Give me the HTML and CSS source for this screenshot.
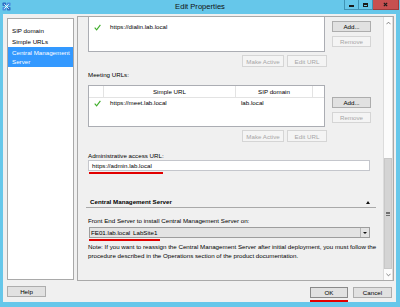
FILE: index.html
```html
<!DOCTYPE html>
<html lang="en">

<head>
    <meta charset="UTF-8">
    <title>Edit Properties</title>
    <link rel="stylesheet" href="styles.css">
</head>

<body>
    <div class="window">
        <div class="titlebar">
            <svg class="app-icon" viewBox="0 0 10 10">
                <rect x="0.5" y="0.5" width="4" height="4" rx="0.8" fill="#2f6fc4" />
                <rect x="5.5" y="0.5" width="4" height="4" rx="0.8" fill="#4a8fe0" />
                <rect x="0.5" y="5.5" width="4" height="4" rx="0.8" fill="#4a8fe0" />
                <rect x="5.5" y="5.5" width="4" height="4" rx="0.8" fill="#2f6fc4" />
                <path d="M2.5 2.5 L7.5 7.5 M7.5 2.5 L2.5 7.5" stroke="#ffffff" stroke-width="1" />
            </svg>
            <div class="title">Edit Properties</div>
            <div class="controls">
                <div class="ctl ctl-min"><span class="min-bar"></span></div>
                <div class="ctl ctl-max"><span class="max-box"></span></div>
                <div class="ctl ctl-close">
                    <svg viewBox="0 0 6 6" class="close-x">
                        <path d="M1 1 L5 5 M5 1 L1 5" stroke="#1a1a1a" stroke-width="1.4" />
                    </svg>
                </div>
            </div>
        </div>

        <div class="client">
            <div class="main-row">
                <ul class="nav">
                    <li>SIP domain</li>
                    <li>Simple URLs</li>
                    <li class="selected">Central Management Server</li>
                </ul>

                <div class="panel">
                    <div class="scroll-area">
                        <div class="inner">
                            <!-- Phone access URLs, header scrolled out of view -->
                            <div class="url-row">
                                <div class="listbox listbox-scrolled">
                                    <div class="list-row">
                                        <span class="check-cell">
                                            <svg class="check" viewBox="0 0 8 8">
                                                <path d="M0.8 4.2 L3 6.6 L7.3 1" fill="none" stroke="#3fae2a" stroke-width="1.3" />
                                            </svg>
                                        </span>
                                        <span class="url-cell">https://dialin.lab.local</span>
                                        <span class="dom-cell"></span>
                                        <span></span>
                                    </div>
                                </div>
                                <div class="side-btns">
                                    <button class="btn btn-side">Add...</button>
                                    <button class="btn btn-side" disabled>Remove</button>
                                </div>
                            </div>
                            <div class="actions">
                                <button class="btn btn-make" disabled>Make Active</button>
                                <button class="btn btn-edit" disabled>Edit URL</button>
                            </div>

                            <div class="label">Meeting URLs:</div>
                            <div class="url-row meeting">
                                <div class="listbox">
                                    <div class="list-head">
                                        <span></span>
                                        <span>Simple URL</span>
                                        <span>SIP domain</span>
                                        <span></span>
                                    </div>
                                    <div class="list-row">
                                        <span class="check-cell">
                                            <svg class="check" viewBox="0 0 8 8">
                                                <path d="M0.8 4.2 L3 6.6 L7.3 1" fill="none" stroke="#3fae2a" stroke-width="1.3" />
                                            </svg>
                                        </span>
                                        <span class="url-cell">https://meet.lab.local</span>
                                        <span class="dom-cell">lab.local</span>
                                        <span></span>
                                    </div>
                                </div>
                                <div class="side-btns">
                                    <button class="btn btn-side">Add...</button>
                                    <button class="btn btn-side" disabled>Remove</button>
                                </div>
                            </div>
                            <div class="actions">
                                <button class="btn btn-make" disabled>Make Active</button>
                                <button class="btn btn-edit" disabled>Edit URL</button>
                            </div>

                            <div class="label label-admin">Administrative access URL:</div>
                            <div class="textbox">https://admin.lab.local</div>
                            <div class="mark mark-admin"></div>

                            <div class="section-head">
                                <span>Central Management Server</span>
                                <span class="collapse"></span>
                            </div>

                            <div class="label label-fe">Front End Server to install Central Management Server on:</div>
                            <div class="combo">
                                <span class="combo-fqdn">FE01.lab.local</span>
                                <span class="combo-site">LabSite1</span>
                                <span class="combo-arrow"></span>
                            </div>
                            <div class="mark mark-combo"></div>

                            <p class="note">Note: If you want to reassign the Central Management Server after initial deployment, you must follow the procedure described in the Operations section of the product documentation.</p>
                        </div>
                    </div>

                    <div class="scrollbar">
                        <div class="sb-btn">
                            <svg viewBox="0 0 6 4" class="chev"><path d="M0.5 3.5 L3 1 L5.5 3.5" fill="none" stroke="#606060" stroke-width="0.9" /></svg>
                        </div>
                        <div class="sb-track">
                            <div class="sb-thumb">
                                <span class="grip"></span>
                            </div>
                        </div>
                        <div class="sb-btn">
                            <svg viewBox="0 0 6 4" class="chev"><path d="M0.5 0.5 L3 3 L5.5 0.5" fill="none" stroke="#606060" stroke-width="0.9" /></svg>
                        </div>
                    </div>
                </div>
            </div>

            <div class="footer">
                <button class="btn btn-foot">Help</button>
                <div class="ok-wrap">
                    <button class="btn btn-foot btn-default">OK</button>
                    <div class="mark mark-ok"></div>
                </div>
                <button class="btn btn-foot btn-cancel">Cancel</button>
            </div>
        </div>
    </div>
</body>

</html>
```

FILE: styles.css
```css
* {
    box-sizing: border-box;
}

body {
    margin: 0;
    font-family: "Liberation Sans", Arial, sans-serif;
    font-size: 6.2px;
    color: #000;
    background: #66c7ea;
}

.window {
    width: 400px;
    height: 307px;
    background: #66c7ea;
    display: flex;
    flex-direction: column;
}

/* Title bar */
.titlebar {
    height: 14px;
    display: grid;
    grid-template-columns: 1fr auto 1fr;
    align-items: start;
}

.app-icon {
    width: 9px;
    height: 9px;
    margin: 2px 0 0 2px;
}

.title {
    font-size: 7.6px;
    line-height: 14px;
    color: #111;
}

.controls {
    justify-self: end;
    display: flex;
    margin-right: 1px;
}

.ctl {
    height: 10px;
    display: flex;
    align-items: center;
    justify-content: center;
    border: 1px solid #3f93b5;
    border-top: none;
}

.ctl-min {
    width: 15px;
}

.ctl-max {
    width: 14px;
    border-left: none;
}

.ctl-close {
    width: 26px;
    background: #c75050;
    border-color: #9c3b3b;
    border-left: none;
}

.min-bar {
    width: 5px;
    height: 2px;
    margin-top: 3px;
    background: #1a1a1a;
}

.max-box {
    width: 5px;
    height: 4px;
    border: 1px solid #1a1a1a;
    border-top-width: 2px;
}

.close-x {
    width: 5px;
    height: 5px;
}

/* Client area */
.client {
    flex: 1;
    margin: 0 4px 5px 3px;
    background: #f0f0f0;
    padding: 2px 2px 0 4px;
    display: flex;
    flex-direction: column;
}

.main-row {
    display: flex;
    gap: 3px;
    align-items: flex-start;
}

.nav {
    margin: 2px 0 0;
    padding: 6px 0 0;
    list-style: none;
    width: 67px;
    height: 262px;
    background: #fff;
    border: 1px solid #a9a9a9;
}

.nav li {
    padding: 0 0 0 4px;
    line-height: 11px;
}

.nav li.selected {
    padding: 1px 0 1px 4px;
    line-height: 9px;
    background: #3399ff;
    color: #fff;
}

.panel {
    width: 317px;
    height: 265px;
    border: 1px solid #a9a9a9;
    display: flex;
}

.scroll-area {
    flex: 1;
    overflow: hidden;
    padding-left: 10px;
}

.inner {
    margin-top: -8px;
}

/* URL lists */
.url-row {
    display: flex;
    gap: 7px;
    align-items: flex-start;
}

.listbox {
    width: 237px;
    height: 42px;
    background: #fff;
    border: 1px solid #abadb3;
}

.listbox-scrolled {
    height: 43px;
    padding-top: 12px;
}

.list-head,
.list-row {
    display: grid;
    grid-template-columns: 15px 132px 77px 1fr;
}

.list-head {
    height: 12px;
    line-height: 11px;
    text-align: center;
    border-bottom: 1px solid #e3e3e3;
}

.list-head span {
    border-right: 1px solid #e3e3e3;
}

.list-head span:last-child {
    border-right: none;
}

.list-row {
    height: 10px;
    line-height: 10px;
}

.check-cell {
    display: flex;
    align-items: center;
    justify-content: center;
    padding-left: 2px;
}

.check {
    width: 7px;
    height: 7px;
}

.url-cell {
    padding-left: 6px;
}

.dom-cell {
    padding-left: 5px;
}

.side-btns {
    display: flex;
    flex-direction: column;
    gap: 4px;
    padding-top: 12px;
}

.btn {
    font: inherit;
    color: #000;
    padding: 0;
    height: 11px;
    line-height: 9px;
    border: 1px solid #adadad;
    background: #e1e1e1;
}

.btn:disabled {
    color: #a6a6a6;
    border-color: #d5d5d5;
    background: #f4f4f4;
}

.btn-side {
    width: 39px;
}

.actions {
    width: 239px;
    margin-top: 3px;
    display: flex;
    justify-content: flex-end;
    gap: 3px;
}

.actions .btn {
    height: 12px;
}

.btn-make {
    width: 42px;
}

.btn-edit {
    width: 40px;
}

.label {
    margin-top: 3px;
    line-height: 9px;
    margin-bottom: 6px;
}

.label-admin {
    margin-top: 9px;
    margin-bottom: 0;
}

.textbox {
    width: 282px;
    height: 11px;
    line-height: 9px;
    padding-left: 3px;
    background: #fff;
    border: 1px solid #c4c6cc;
}

.mark {
    height: 2px;
    background: #e20000;
}

.mark-admin {
    width: 74px;
    margin: 1px 0 0 1px;
}

/* Collapsible section */
.section-head {
    margin: 23px 0 0 -2px;
    width: 290px;
    height: 11px;
    line-height: 10px;
    padding: 0 6px 0 4px;
    display: flex;
    justify-content: space-between;
    align-items: center;
    font-weight: bold;
    border-bottom: 1px solid #a9a9a9;
}

.collapse {
    width: 0;
    height: 0;
    border-left: 2.5px solid transparent;
    border-right: 2.5px solid transparent;
    border-bottom: 3px solid #111;
}

.label-fe {
    margin-top: 8px;
    margin-bottom: 2px;
}

.combo {
    width: 281px;
    height: 11px;
    margin-left: 1px;
    display: flex;
    align-items: stretch;
    line-height: 9px;
    background: #e3e3e3;
    border: 1px solid #9d9d9d;
}

.combo-fqdn {
    width: 43px;
    padding-left: 1px;
}

.combo-site {
    flex: 1;
}

.combo-arrow {
    width: 9px;
    border-left: 1px solid #b5b5b5;
    display: flex;
    align-items: center;
    justify-content: center;
}

.combo-arrow::after {
    content: "";
    border-left: 2px solid transparent;
    border-right: 2px solid transparent;
    border-top: 2.5px solid #111;
}

.mark-combo {
    width: 71px;
    margin: 1px 0 0 1px;
}

.note {
    margin: 1px 0 0;
    width: 290px;
    line-height: 9px;
}

/* Scrollbar */
.scrollbar {
    width: 10px;
    display: flex;
    flex-direction: column;
    background: #fcfcfc;
    border-left: 1px solid #dcdcdc;
    border-right: 1px solid #dcdcdc;
}

.sb-btn {
    height: 11px;
    display: flex;
    align-items: center;
    justify-content: center;
}

.chev {
    width: 5px;
    height: 4px;
}

.sb-track {
    flex: 1;
    padding-top: 130px;
}

.sb-thumb {
    height: 111px;
    background: #d4d4d4;
    border: 1px solid #c8c8c8;
    display: flex;
    align-items: center;
    justify-content: center;
}

.grip {
    width: 4px;
    height: 4px;
    border-top: 1px solid #707070;
    border-bottom: 1px solid #707070;
    background: linear-gradient(#707070, #707070) center / 4px 1px no-repeat;
}

/* Footer buttons */
.footer {
    display: flex;
    align-items: flex-start;
    padding: 5px 2px 0 0;
}

.btn-foot {
    width: 39px;
}

.ok-wrap {
    margin: 1px 0 0 auto;
    display: flex;
    flex-direction: column;
}

.btn-default {
    width: 38px;
    border-color: #8a8a8a;
}

.mark-ok {
    width: 38px;
    margin-top: 2px;
}

.btn-cancel {
    margin: 1px 0 0 5px;
}
```
